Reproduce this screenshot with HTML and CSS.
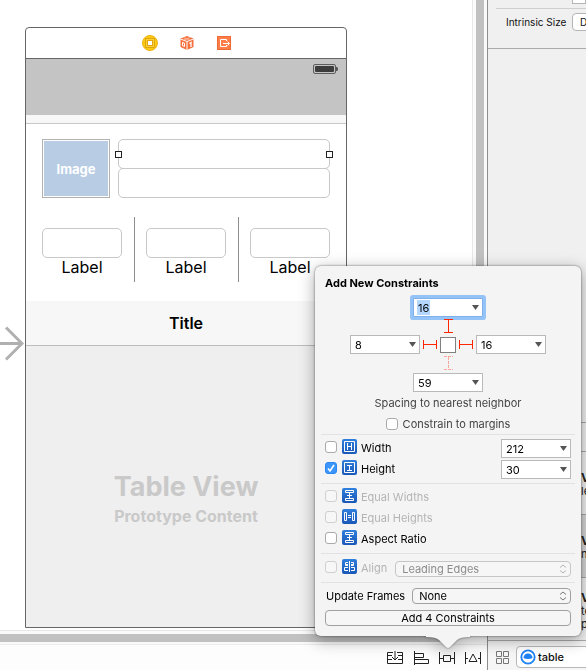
FILE: index.html
```html
<!DOCTYPE html>
<html lang="en">
<head>
<meta charset="utf-8">
<title>Interface Builder</title>
<link rel="stylesheet" href="styles.css">
</head>
<body>
<div class="window">
  <main class="editor">
    <div class="workspace">
      <div class="canvas">
        <svg class="entry" width="24" height="36" viewBox="0 0 24 36" fill="none" stroke="#b0b0b0" stroke-width="3"><path d="M0 18.500H22M6 2.500L22 18.500L6 34.500"/></svg>
        <section class="scene">
          <header class="dock">
            <svg width="16" height="16" viewBox="0 0 16 16"><circle cx="8" cy="8" r="7.500" fill="#ffcb12" stroke="#eeb211"/><rect x="3.500" y="3.500" width="9" height="9" fill="#ffd23a" stroke="#e2a60d"/><rect x="5.500" y="5.500" width="5" height="5" fill="#fff" stroke="#e2a60d"/></svg>
            <svg width="16" height="16" viewBox="0 0 16 16"><path d="M8 1L14.500 3.500V12L8 15L1.500 12V3.500Z" fill="#f5703d"/><path d="M1.500 4L8 6.500L14.500 4M8 6.500V15" fill="none" stroke="#fff"/><path d="M4.500 2.700L11 5.200M11 2.500L5 5" stroke="#ffc3a8" stroke-width=".8"/><path d="M3.500 7.500L5.500 8.200V11.500L3.500 10.700Z" fill="none" stroke="#fff"/><path d="M10.500 8.500L12 7.500V12" fill="none" stroke="#fff" stroke-width="1.300"/></svg>
            <svg width="16" height="16" viewBox="0 0 16 16"><rect x="1.500" y="1.500" width="13" height="13" fill="#ff7d48" stroke="#ee6b38"/><path d="M10.500 6V4.500H4.500V11.500H10.500V10M7 8.500H13M11.500 6.500L13.500 8.500L11.500 10.500" fill="none" stroke="#fff"/></svg>
          </header>
          <div class="statusbar">
            <svg width="25" height="10" viewBox="0 0 25 10"><rect x=".5" y=".5" width="22" height="9" rx="1.500" fill="#c4c4c4" stroke="#5d5d5d"/><rect x="2" y="2" width="19" height="6" rx="1" fill="#3c3c3c"/><path d="M23 3H24Q25 3 25 5T24 7H23Z" fill="#555"/></svg>
          </div>
          <div class="navline"></div>
          <div class="profile">
            <div class="image">Image</div>
            <div class="stack">
              <div class="slot slot-selected"><input class="field" aria-label="First text field"><i class="handle handle-left"></i><i class="handle handle-right"></i></div>
              <div class="slot"><input class="field" aria-label="Second text field"></div>
            </div>
          </div>
          <div class="stats">
            <label class="stat"><input class="field"><span>Label</span></label>
            <i class="rule"></i>
            <label class="stat"><input class="field"><span>Label</span></label>
            <i class="rule"></i>
            <label class="stat"><input class="field"><span>Label</span></label>
          </div>
          <div class="toolbar">Title</div>
          <div class="table">
            <div class="table-name">Table View</div>
            <div class="table-kind">Prototype Content</div>
          </div>
        </section>
      </div>
      <div class="vscroll"><i></i></div>
    </div>
    <div class="hscroll"><i></i></div>
    <footer class="layoutbar">
      <button aria-label="Stack"><svg width="16" height="14" viewBox="0 0 16 14"><path d="M6 1.500H.5V12.500H15.500V1.500H10M1 4.500H5M11 4.500H15M1 8.500H5M11 8.500H15M8 0V9M5 6L8 9L11 6"/></svg></button>
      <button aria-label="Align"><svg width="16" height="14" viewBox="0 0 16 14"><path d="M1.500 0V14M2 2.500H10.500V6.500H2M2 8.500H15.500V12.500H2"/></svg></button>
      <button aria-label="Pin"><svg width="16" height="14" viewBox="0 0 16 14"><path d="M.5 1V13M15.500 1V13M1 7.500H4M12 7.500H15M4.500 4.500H11.500V10.500H4.500Z"/></svg></button>
      <button aria-label="Resolve"><svg width="16" height="14" viewBox="0 0 16 14"><path d="M.5 1V13M15.500 1V13M1 7.500H3M13 7.500H15M8 3L12 10.500H4Z"/></svg></button>
    </footer>
  </main>

  <aside class="inspector">
    <div class="size-pane">
      <div class="upper"><i></i></div>
      <div class="intrinsic"><label for="intrinsic">Intrinsic Size</label><select id="intrinsic"><option>Default (System Defined)</option></select></div>
    </div>
    <div class="blank"></div>
    <div class="tabs"></div>
    <ul class="library">
      <li><b>V</b><span>le</span></li>
      <li class="picked"><b>V</b><span>n,</span></li>
      <li class="tall"><b>V</b><span>te</span><span>pl</span></li>
    </ul>
    <div class="filter">
      <svg width="13" height="14" viewBox="0 0 13 14" fill="none" stroke="#777"><path d="M.5 1.500H5.500V6.500H.5ZM7.500 1.500H12.500V6.500H7.500ZM.5 8.500H5.500V13.500H.5ZM7.500 8.500H12.500V13.500H7.500Z"/></svg>
      <label class="search"><svg width="16" height="16" viewBox="0 0 16 16"><circle cx="8" cy="8" r="6.700" fill="#fff" stroke="#1e82f5" stroke-width="1.800"/><path d="M3.500 9A4.500 4.500 0 0 1 12.500 9Q11 10 8 10T3.500 9Z" fill="#1e82f5"/></svg><input value="table" aria-label="Filter library"></label>
    </div>
  </aside>

  <form class="popover">
    <h1>Add New Constraints</h1>
    <div class="spacing">
      <div class="combo top focused"><input value="16" aria-label="Top spacing"><button type="button" aria-label="Top options"></button></div>
      <svg class="strut strut-top" width="10" height="14" viewBox="0 0 10 14"><path d="M1 .5H10M1 13.500H10M5.500 1V13"/></svg>
      <div class="combo left"><input value="8" aria-label="Left spacing"><button type="button" aria-label="Left options"></button></div>
      <svg class="strut strut-left" width="14" height="11" viewBox="0 0 14 11"><path d="M.5 1V10M13.500 1V10M1 5.500H13"/></svg>
      <i class="box"></i>
      <svg class="strut strut-right" width="14" height="11" viewBox="0 0 14 11"><path d="M.5 1V10M13.500 1V10M1 5.500H13"/></svg>
      <div class="combo right"><input value="16" aria-label="Right spacing"><button type="button" aria-label="Right options"></button></div>
      <svg class="strut strut-bottom" width="10" height="15" viewBox="0 0 10 15"><path d="M1 .5H10M1 13.500H10M5.500 1V13"/></svg>
      <div class="combo bottom"><input value="59" aria-label="Bottom spacing"><button type="button" aria-label="Bottom options"></button></div>
    </div>
    <p class="caption">Spacing to nearest neighbor</p>
    <label class="margins"><input type="checkbox">Constrain to margins</label>

    <div class="group">
      <div class="row">
        <input type="checkbox" id="w"><svg class="badge" viewBox="0 0 15 15"><path d="M2.500 2.500H12.500V12.500H2.500Z"/><path d="M5.500 4V11M9.500 4V11M6 7.500H9"/></svg><label for="w">Width</label>
        <div class="combo"><input value="212" aria-label="Width value"><button type="button" aria-label="Width options"></button></div>
      </div>
      <div class="row">
        <input type="checkbox" id="h" checked><svg class="badge" viewBox="0 0 15 15"><path d="M2.500 2.500H12.500V12.500H2.500Z"/><path d="M5 5.500H10M5 10.500H10M7.500 5V10"/></svg><label for="h">Height</label>
        <div class="combo"><input value="30" aria-label="Height value"><button type="button" aria-label="Height options"></button></div>
      </div>
    </div>
    <div class="group">
      <div class="row off"><input type="checkbox" id="ew" disabled><svg class="badge" viewBox="0 0 15 15"><path d="M3.500 2.500H11.500V4.500H3.500ZM3.500 10.500H11.500V12.500H3.500ZM5 7.500H10M7.500 5V10"/></svg><label for="ew">Equal Widths</label></div>
      <div class="row off"><input type="checkbox" id="eh" disabled><svg class="badge" viewBox="0 0 15 15"><path d="M2.500 3.500H4.500V11.500H2.500ZM10.500 3.500H12.500V11.500H10.500ZM6 6.500H9M6 8.500H9"/></svg><label for="eh">Equal Heights</label></div>
      <div class="row"><input type="checkbox" id="ar"><svg class="badge" viewBox="0 0 15 15"><path d="M3.500 2.500H11.500V4.500H3.500ZM3.500 10.500H11.500V12.500H3.500ZM5 7.500H10M7.500 5V10"/></svg><label for="ar">Aspect Ratio</label></div>
    </div>
    <div class="group group-align">
      <div class="row off"><input type="checkbox" id="al" disabled><svg class="badge" viewBox="0 0 15 15"><path d="M6 3.500H3.500V6.500H6M6 8.500H2.500V11.500H6M9 3.500H11.500V6.500H9M9 8.500H12.500V11.500H9M7.500 2V13M4 5.500H6M9 5.500H11"/></svg><label for="al">Align</label>
        <span class="popup"><select aria-label="Align edges" disabled><option>Leading Edges</option></select><svg width="8" height="10" viewBox="0 0 8 10"><path d="M1 3.500L4 1L7 3.500M1 6.500L4 9L7 6.500"/></svg></span></div>
    </div>
    <div class="group group-last">
      <div class="frames"><label for="uf">Update Frames</label>
        <span class="popup"><select id="uf"><option>None</option></select><svg width="8" height="10" viewBox="0 0 8 10"><path d="M1 3.500L4 1L7 3.500M1 6.500L4 9L7 6.500"/></svg></span></div>
      <button type="button" class="add">Add 4 Constraints</button>
    </div>
    <svg class="tail" width="44" height="13" viewBox="0 0 44 13"><path d="M0 0H44V1Q34 1 31 4L24 11Q22 13 20 11L13 4Q10 1 0 1Z" fill="#f4f4f4"/></svg>
  </form>
</div>
</body>
</html>
```
FILE: styles.css
```css
* { box-sizing: border-box; }
body {
  margin: 0;
  font: 11px/14px Inter, "Liberation Sans", sans-serif;
  color: #111;
}
input, select, button { font: inherit; color: inherit; margin: 0; }
svg { display: block; flex: none; }

.window {
  position: relative;
  display: flex;
  height: 100vh;
  overflow: hidden;
  background: #fff;
}
.editor { flex: 1; min-width: 0; display: flex; flex-direction: column; }
.workspace { flex: 1; min-height: 0; display: flex; }
.canvas { position: relative; flex: 1; display: flex; padding: 27px 0 2px 25px; }
.entry { position: absolute; left: 0; top: 325px; }

.scene {
  width: 322px;
  display: flex;
  flex-direction: column;
  border: 1px solid #666;
  border-radius: 4px 4px 0 0;
  font-size: 16px;
  line-height: 20px;
}
.dock {
  height: 31px;
  display: flex;
  align-items: center;
  justify-content: center;
  gap: 21px;
  padding-left: 2px;
  border-bottom: 1px solid #666;
}
.statusbar {
  height: 56px;
  padding: 5px 8px;
  display: flex;
  justify-content: flex-end;
  background: #c4c4c4;
}
.navline { height: 9px; background: #f7f7f7; border-bottom: 1px solid #c8c8c8; }
.profile { display: flex; gap: 8px; padding: 15px 16px 0; }
.image {
  width: 68px;
  height: 59px;
  display: flex;
  align-items: center;
  justify-content: center;
  border: 1px solid #b2b2b2;
  background: #b8cce4;
  box-shadow: inset 0 0 0 1px #fff;
  color: #fff;
  font-size: 13px;
  font-weight: 700;
}
.stack { flex: 1; }
.slot { position: relative; height: 30px; }
.slot + .slot { margin-top: -1px; }
.slot-selected { z-index: 1; }
.field {
  display: block;
  width: 100%;
  height: 30px;
  border: 1px solid #c8c8c8;
  border-radius: 5px;
  background: #fff;
  padding: 0 6px;
}
.slot-selected .field { background: transparent; }
.handle {
  position: absolute;
  top: 12px;
  width: 7px;
  height: 7px;
  border: 1px solid #222;
  background: #fff;
}
.handle-left { left: -3px; }
.handle-right { right: -3px; }
.stats {
  display: flex;
  justify-content: space-between;
  align-items: center;
  padding: 19px 16px;
}
.stat { width: 80px; padding-top: 5px; text-align: center; color: #000; line-height: 18px; }
.stat span { display: block; }
.rule { width: 1px; height: 65px; background: #8e8e8e; }
.toolbar {
  height: 45px;
  display: flex;
  align-items: center;
  justify-content: center;
  background: #f7f7f7;
  border-bottom: 1px solid #bdbdbd;
  color: #000;
  font-weight: 600;
}
.table {
  flex: 1;
  display: flex;
  flex-direction: column;
  align-items: center;
  justify-content: center;
  padding-top: 24px;
  background: #efefef;
  color: #c9c9c9;
  font-weight: 700;
}
.table-name { font-size: 27px; line-height: 34px; }
.table-kind { line-height: 24px; }

.vscroll {
  width: 15px;
  padding: 0 3px;
  background: #fafafa;
  border-left: 1px solid #e8e8e8;
}
.vscroll i { display: block; width: 8px; height: 100%; background: #c1c1c1; }
.hscroll {
  height: 15px;
  padding: 3px 40px 3px 0;
  background: #fafafa;
  border-top: 1px solid #e8e8e8;
  border-bottom: 1px solid #ececec;
}
.hscroll i { display: block; height: 8px; background: #c1c1c1; }
.layoutbar {
  height: 25px;
  display: flex;
  align-items: center;
  justify-content: flex-end;
  gap: 10px;
  padding-right: 6px;
  background: #fdfdfd;
}
.layoutbar button { border: 0; padding: 0; background: none; }
.layoutbar svg { fill: none; stroke: #222; }

.inspector {
  width: 99px;
  overflow: hidden;
  display: flex;
  flex-direction: column;
  border-left: 1px solid #8e8e8e;
  background: #f0f0f0;
}
.size-pane { height: 49px; border-bottom: 1px solid #ababab; }
.upper {
  height: 9px;
  margin-left: 8px;
  padding-left: 76px;
  border-bottom: 1px solid #cfcfcf;
}
.upper i {
  display: block;
  height: 4px;
  border: 1px solid #b5b5b5;
  border-top: 0;
  background: #fff;
}
.intrinsic {
  display: flex;
  align-items: center;
  width: 240px;
  padding: 4px 0 0 18px;
  font-size: 10px;
}
.intrinsic label { width: 66px; white-space: nowrap; }
.intrinsic select {
  appearance: none;
  height: 18px;
  width: 150px;
  padding: 0 7px;
  border: 1px solid #b5b5b5;
  border-radius: 4px;
  background: #fff;
}
.blank { flex: 1; }
.tabs { height: 29px; border-top: 1px solid #a8a8a8; }
.library {
  margin: 0;
  padding: 0;
  list-style: none;
  color: #222;
}
.library li {
  height: 63px;
  padding: 18px 0 0 93px;
  border-top: 1px solid #a8a8a8;
  line-height: 13px;
}
.library .tall { padding-top: 12px; }
.library b { font-size: 12px; line-height: 15px; }
.library b, .library span { display: block; }
.library .picked { background: #d6d6d6; }
.filter {
  height: 30px;
  display: flex;
  align-items: center;
  gap: 7px;
  padding: 2px 0 0 8px;
  border-top: 1px solid #ababab;
  background: #f6f6f6;
}
.search {
  flex: none;
  width: 180px;
  height: 22px;
  display: flex;
  align-items: center;
  gap: 2px;
  padding-left: 3px;
  border: 1px solid #b8b8b8;
  border-radius: 4px;
  background: #fff;
}
.search input { border: 0; padding: 0; width: 120px; outline: 0; font-weight: 500; }

.popover {
  position: absolute;
  right: 5px;
  bottom: 34px;
  width: 266px;
  padding: 10px;
  border-radius: 6px;
  background: #f4f4f4;
  color: #000;
  filter: drop-shadow(0 0 1px rgba(0, 0, 0, .5)) drop-shadow(0 4px 8px rgba(0, 0, 0, .35));
}
.tail { position: absolute; left: 111px; top: 100%; }
.popover h1 { margin: 0 0 8px; font-size: 11px; line-height: 14px; font-weight: 700; }
.spacing {
  display: grid;
  grid-template-columns: 70px 20px 16px 20px 70px;
  grid-template-rows: 19px 18px 19px 19px 19px;
  justify-content: center;
  align-items: center;
  justify-items: center;
}
.top, .bottom { grid-column: 1 / -1; }
.strut { fill: none; stroke: #ff2600; }
.strut-top { grid-area: 2 / 3; }
.left { grid-area: 3 / 1; }
.strut-left { grid-area: 3 / 2; }
.box {
  grid-area: 3 / 3;
  align-self: end;
  width: 16px;
  height: 16px;
  margin-bottom: 1px;
  border: 1px solid #808080;
  background: #fff;
}
.strut-right { grid-area: 3 / 4; }
.right { grid-area: 3 / 5; }
.strut-bottom { grid-area: 4 / 3; stroke: #f8a79a; stroke-dasharray: 3 1; }
.bottom { grid-row: 5; }
.combo {
  width: 70px;
  height: 19px;
  display: flex;
  align-items: center;
  justify-content: space-between;
  padding: 0 3px;
  border: 1px solid #b9b9b9;
  background: #fff;
}
.combo input {
  field-sizing: content;
  max-width: 50px;
  height: 15px;
  padding: 0 1px;
  border: 0;
  outline: 0;
  background: none;
}
.combo button {
  width: 7px;
  height: 5px;
  padding: 0;
  border: 0;
  background: #555;
  clip-path: polygon(0 0, 100% 0, 50% 100%);
}
.focused { border-color: #7fb0ec; box-shadow: 0 0 0 3px #94c3f8; border-radius: 1px; }
.focused input { background: #b3d7ff; }
.caption { margin: 4px 0 0; text-align: center; color: #444; }
.margins {
  display: flex;
  justify-content: center;
  align-items: center;
  gap: 5px;
  margin: 7px 0 3px;
  color: #444;
}
input[type="checkbox"] {
  appearance: none;
  flex: none;
  width: 12px;
  height: 12px;
  border: 1px solid #aaa;
  border-radius: 3px;
  background: #fff;
}
input[type="checkbox"]:disabled { border-color: #cfcfcf; background: #f7f7f7; }
input[type="checkbox"]:checked {
  border-color: #2c86f5;
  background: #3b95fb url("data:image/svg+xml,%3Csvg xmlns='http://www.w3.org/2000/svg' viewBox='0 0 10 10'%3E%3Cpath d='M2 5.500L4 8L8 2' fill='none' stroke='white' stroke-width='1.600'/%3E%3C/svg%3E");
}
.group { margin: 0 -4px; padding: 3px 4px; border-top: 1px solid #e2e2e2; }
.row { display: flex; align-items: center; height: 21px; }
.row input[type="checkbox"] { margin-bottom: 3px; }
.badge {
  width: 15px;
  height: 15px;
  margin: 0 4px 4px 5px;
  border-radius: 2px;
  background: linear-gradient(#2f7fdc, #1a58b8);
  fill: none;
  stroke: #fff;
}
.row .combo { margin-left: auto; }
.row label { margin-bottom: 1px; }
.off { color: #b4b4b4; }
.group-align { padding: 4px 4px 3px; }
.group-last { padding: 5px 4px 0; }
.popup { position: relative; flex: 1; margin-left: 8px; }
.popup select {
  appearance: none;
  display: block;
  width: 100%;
  height: 16px;
  padding: 0 6px;
  border: 1px solid #a0a0a0;
  border-radius: 4px;
  background: #f6f6f6;
  line-height: 14px;
  opacity: 1;
}
.popup svg {
  position: absolute;
  right: 4px;
  top: 3px;
  fill: none;
  stroke: #777;
  pointer-events: none;
}
.off .popup select { border-color: #c6c6c6; color: #8c8c8c; }
.off .popup svg { stroke: #b5b5b5; }
.frames { display: flex; align-items: center; margin-bottom: 6px; padding-left: 1px; }
.frames .popup { margin-left: 7px; }
.add {
  display: block;
  width: 100%;
  height: 16px;
  padding: 0;
  border: 1px solid #a0a0a0;
  border-radius: 4px;
  background: #f6f6f6;
  line-height: 14px;
}
```
